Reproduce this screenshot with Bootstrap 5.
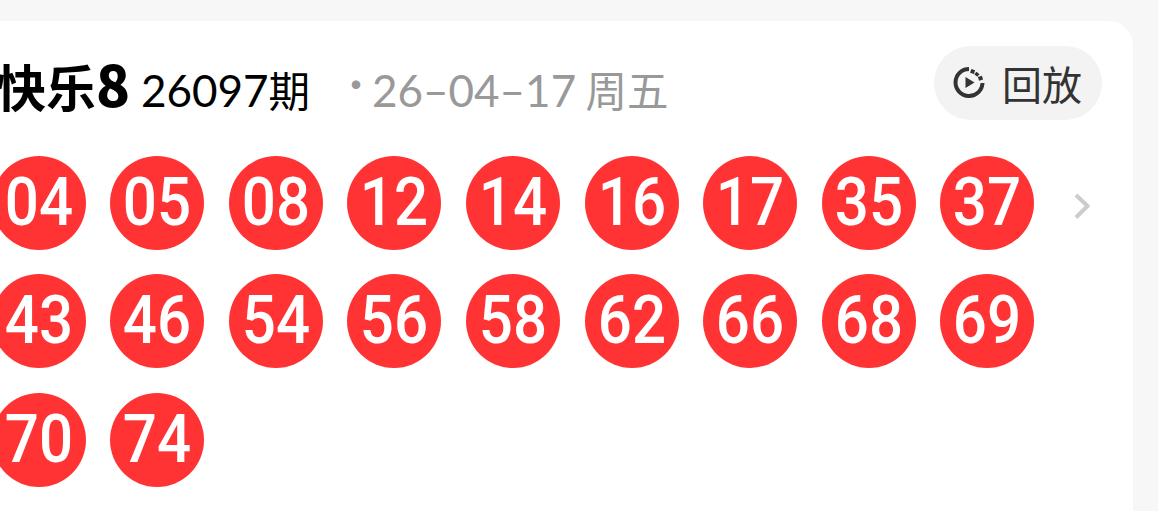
<!DOCTYPE html>
<html lang="zh-CN">
<head>
<meta charset="utf-8">
<meta name="viewport" content="width=device-width, initial-scale=1">
<title>快乐8</title>
<link href="https://cdn.jsdelivr.net/npm/bootstrap@5.3.0/dist/css/bootstrap.min.css" rel="stylesheet">
<style>
body{background:#f7f7f7;height:511px;overflow:hidden;font-family:"Noto Sans CJK SC",sans-serif}
.draw-panel{margin:21px 25px 0 0;height:490px;background:#fff;border-radius:0 24px 0 0;overflow:hidden}
.draw-head{height:134.5px;padding:25px 31px 0 0}
.head-text{height:74px;line-height:74px}
.game{font-size:50px;font-weight:700;color:#000;width:145px;margin-left:-4px}
.game b{font-size:56px}
.issue{font-size:41.5px;color:#000;width:195px;padding-top:6px}
.issue i,.date i{font:400 44px/1 Lato,sans-serif}
.dot{width:36px;color:#999;font-size:40px}
.date{font-size:41.5px;color:#999;padding-top:6px}
.replay{width:168px;height:74px;border-radius:37px;background:#f3f3f3;color:#333;font-size:40px;line-height:74px;padding-left:18px}
.balls{display:grid;grid-template-columns:repeat(9,94px);column-gap:24.6px;row-gap:24.6px;margin-left:-8.4px}
.ball{width:94px;height:94px;border-radius:50%;background:#f33;color:#fff;font:500 66px/94px Roboto,sans-serif}
.ball span{display:block;transform:scaleX(.91)}
.arrow{margin:36px 0 0 38px}
</style>
</head>
<body>
<main class="draw-panel">
  <header class="draw-head d-flex justify-content-between align-items-start">
    <div class="head-text d-flex text-nowrap">
      <div class="game flex-shrink-0">快乐<b>8</b></div>
      <div class="issue flex-shrink-0"><i>26097</i>期</div>
      <div class="dot">·</div>
      <div class="date"><i>26–04–17</i> 周五</div>
    </div>
    <div class="replay d-flex text-nowrap">
      <svg class="flex-shrink-0" width="34" height="34" viewBox="0 0 34 34" style="margin:20px 16px 0 0" fill="none" stroke="#333" stroke-width="4">
        <path d="M17 3A13.5 13.5 0 1 0 30.5 17"/>
        <path stroke-width="4" d="M21.2 3.6l-1.2 3.7M26 7l-2.2 2.5M30.5 11.7l-4 1.2" stroke-dasharray="none"/>
        <path d="M13.5 11v11l9-5.5z" fill="#333" stroke="none"/>
      </svg>
      <span>回放</span>
    </div>
  </header>
  <div class="d-flex align-items-start">
    <div class="balls text-center flex-shrink-0">
      <div class="ball"><span>04</span></div><div class="ball"><span>05</span></div><div class="ball"><span>08</span></div>
      <div class="ball"><span>12</span></div><div class="ball"><span>14</span></div><div class="ball"><span>16</span></div>
      <div class="ball"><span>17</span></div><div class="ball"><span>35</span></div><div class="ball"><span>37</span></div>
      <div class="ball"><span>43</span></div><div class="ball"><span>46</span></div><div class="ball"><span>54</span></div>
      <div class="ball"><span>56</span></div><div class="ball"><span>58</span></div><div class="ball"><span>62</span></div>
      <div class="ball"><span>66</span></div><div class="ball"><span>68</span></div><div class="ball"><span>69</span></div>
      <div class="ball"><span>70</span></div><div class="ball"><span>74</span></div>
    </div>
    <svg class="arrow flex-shrink-0" width="20" height="28" viewBox="0 0 20 28" fill="none" stroke="#ccc" stroke-width="4"><path d="M4 3l11.5 11L4 25.5"/></svg>
  </div>
</main>
<script src="https://cdn.jsdelivr.net/npm/bootstrap@5.3.0/dist/js/bootstrap.bundle.min.js"></script>
</body>
</html>
